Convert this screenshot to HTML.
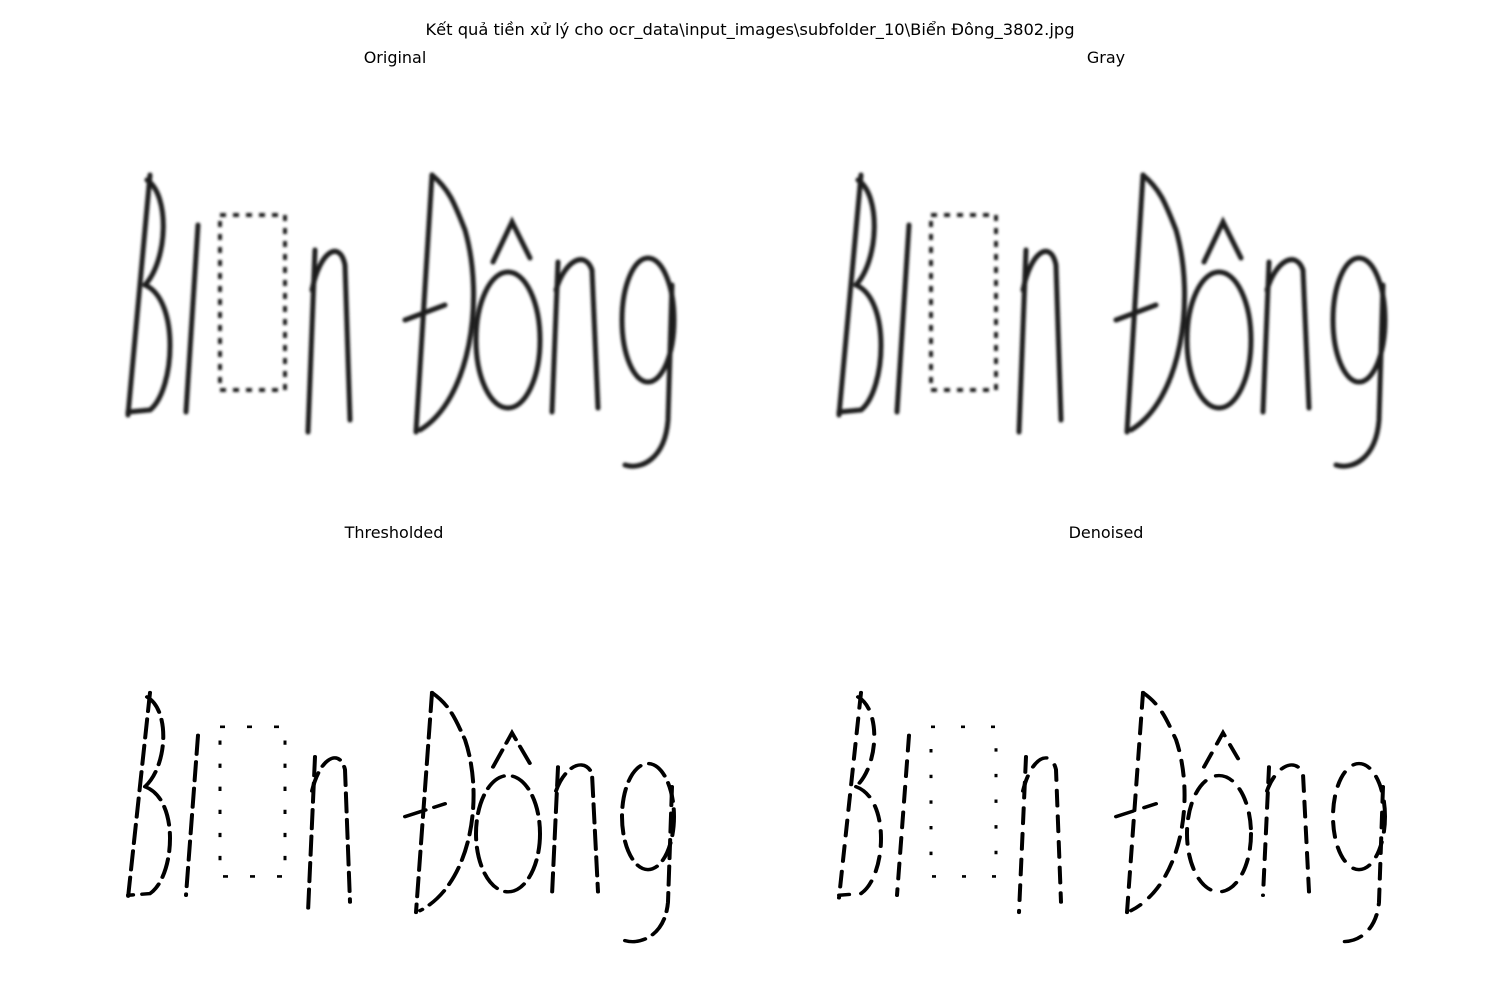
<!DOCTYPE html>
<html><head><meta charset="utf-8"><style>
html,body{margin:0;padding:0;background:#fff;}
body{width:1500px;height:1000px;position:relative;overflow:hidden;font-family:"DejaVu Sans","Liberation Sans",sans-serif;}
.t{position:absolute;font-size:16px;color:#000;white-space:nowrap;transform:translateX(-50%);line-height:1;}
svg{position:absolute;left:0;top:0;}
</style></head><body>
<div class="t" style="left:750px;top:22px;font-size:16.3px;">Kết quả tiền xử lý cho ocr_data\input_images\subfolder_10\Biển Đông_3802.jpg</div>
<div class="t" style="left:395px;top:50px;">Original</div>
<div class="t" style="left:1106px;top:50px;">Gray</div>
<div class="t" style="left:394px;top:525px;">Thresholded</div>
<div class="t" style="left:1106px;top:525px;">Denoised</div>
<svg width="1500" height="1000" viewBox="0 0 1500 1000">
<defs>
<filter id="bl" x="-10%" y="-10%" width="120%" height="120%"><feGaussianBlur stdDeviation="1.4"/></filter>
<g id="m" fill="none" stroke-linecap="round">
<path d="M150,175 L128,415"/>
<path d="M147,180 C170,195 168,260 145,285"/>
<path d="M145,285 C180,300 175,390 150,410 L128,412"/>
<path d="M198,225 L186,412"/>
<path d="M315,250 L308,432"/>
<path d="M312,290 C320,250 340,240 345,265 L350,420"/>
<path d="M432,175 L416,432"/>
<path d="M432,175 C450,190 455,205 465,230 C485,300 470,400 420,430"/>
<path d="M405,320 L445,305"/>
<ellipse cx="508" cy="340" rx="32" ry="68"/>
<path d="M493,262 L512,222 L530,258"/>
<path d="M558,262 L552,412"/>
<path d="M556,290 C565,260 585,250 592,270 L598,408"/>
<ellipse cx="648" cy="320" rx="26" ry="62"/>
<path d="M672,285 L668,420 C665,460 640,470 625,465"/>
</g>
<rect id="bx" x="220" y="215" width="65" height="175" fill="none"/>
</defs>
<g stroke="#1a1a1a" stroke-width="5" filter="url(#bl)"><use href="#m"/><use href="#bx" stroke-dasharray="6 7" stroke-width="4"/></g>
<g stroke="#1a1a1a" stroke-width="5" filter="url(#bl)" transform="translate(711,0)"><use href="#m"/><use href="#bx" stroke-dasharray="6 7" stroke-width="4"/></g>
<g stroke="#000" stroke-width="4" stroke-dasharray="22 9" transform="translate(0,543) scale(1,0.855)"><use href="#m"/><use href="#bx" stroke-dasharray="5 22" stroke-width="3"/></g>
<g stroke="#000" stroke-width="4" stroke-dasharray="18 12" transform="translate(711,543) scale(1,0.855)"><use href="#m"/><use href="#bx" stroke-dasharray="4 26" stroke-width="3"/></g>
</svg>
</body></html>
